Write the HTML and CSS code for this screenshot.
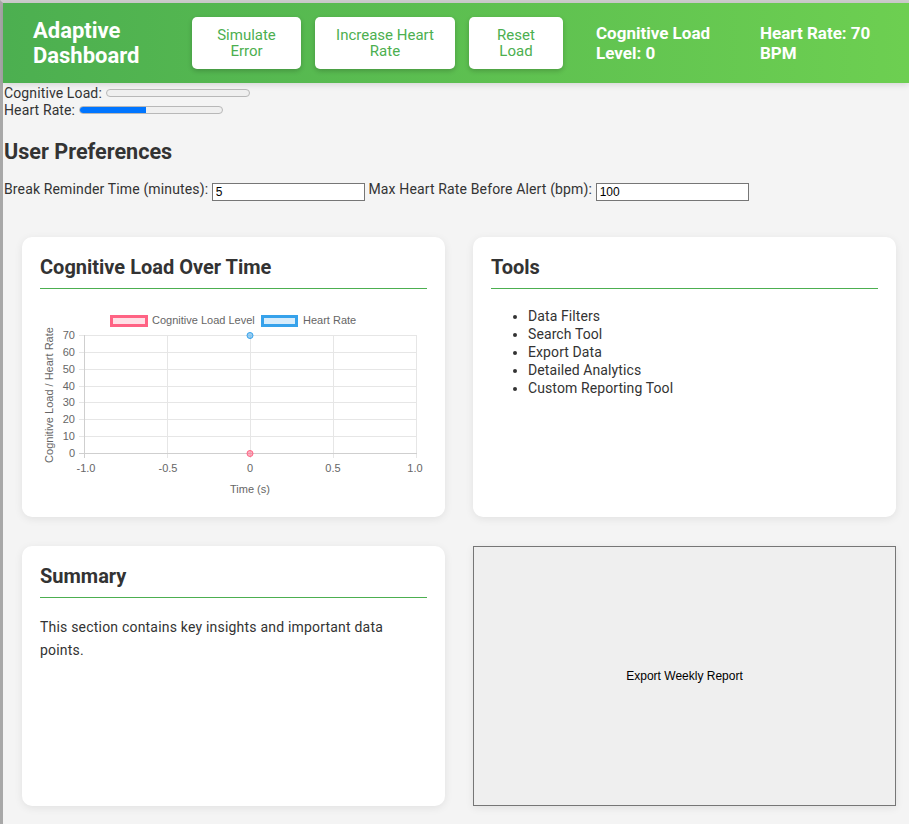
FILE: index.html
```html
<!DOCTYPE html>
<html lang="en">
<head>
<meta charset="utf-8">
<title>Adaptive Dashboard</title>
<link rel="stylesheet" href="styles.css">
</head>
<body>
<div class="frame">
  <header class="topbar">
    <h1 class="brand">Adaptive Dashboard</h1>
    <div class="actions">
      <button class="act act-error">Simulate Error</button>
      <button class="act act-heart">Increase Heart Rate</button>
      <button class="act act-reset">Reset Load</button>
    </div>
    <div class="status">
      <span class="stat stat-load">Cognitive Load Level: 0</span>
      <span class="stat stat-hr">Heart Rate: 70 BPM</span>
    </div>
  </header>

  <div class="meters">
    <div class="meter-row">Cognitive Load: <span class="meter"><span class="meter-fill" style="width:0%"></span></span></div>
    <div class="meter-row">Heart Rate: <span class="meter"><span class="meter-fill" style="width:46.7%"></span></span></div>
  </div>

  <section class="prefs">
    <h2 class="prefs-title">User Preferences</h2>
    <div class="prefs-row">
      <label>Break Reminder Time (minutes): <input class="pref-input" type="text" value="5"></label>
      <label>Max Heart Rate Before Alert (bpm): <input class="pref-input" type="text" value="100"></label>
    </div>
  </section>

  <main class="grid">
    <section class="card">
      <h3 class="card-title">Cognitive Load Over Time</h3>
      <svg class="chart" width="387" height="200" viewBox="0 0 387 200">
        <g class="grid-lines" stroke="#e6e6e6" stroke-width="1">
          <line x1="39" y1="35.5" x2="376" y2="35.5"/>
          <line x1="39" y1="52.5" x2="376" y2="52.5"/>
          <line x1="39" y1="69.5" x2="376" y2="69.5"/>
          <line x1="39" y1="86.5" x2="376" y2="86.5"/>
          <line x1="39" y1="102.5" x2="376" y2="102.5"/>
          <line x1="39" y1="119.5" x2="376" y2="119.5"/>
          <line x1="39" y1="136.5" x2="376" y2="136.5"/>
          <line x1="127.5" y1="35" x2="127.5" y2="158"/>
          <line x1="210.5" y1="35" x2="210.5" y2="158"/>
          <line x1="293.5" y1="35" x2="293.5" y2="158"/>
          <line x1="376.5" y1="35" x2="376.5" y2="158"/>
        </g>
        <g stroke="#cfcfcf" stroke-width="1">
          <line x1="39" y1="153.5" x2="377" y2="153.5"/>
          <line x1="44.5" y1="35" x2="44.5" y2="158"/>
        </g>
        <g class="legend">
          <rect x="71.5" y="16.5" width="35" height="9" fill="rgba(255,99,132,0.2)" stroke="#ff6384" stroke-width="3"/>
          <text x="112" y="24" class="chart-text">Cognitive Load Level</text>
          <rect x="222.5" y="16.5" width="34" height="9" fill="rgba(54,162,235,0.2)" stroke="#36a2eb" stroke-width="3"/>
          <text x="263" y="24" class="chart-text">Heart Rate</text>
        </g>
        <g class="chart-text" text-anchor="end">
          <text x="35" y="39">70</text>
          <text x="35" y="56">60</text>
          <text x="35" y="73">50</text>
          <text x="35" y="90">40</text>
          <text x="35" y="106">30</text>
          <text x="35" y="123">20</text>
          <text x="35" y="140">10</text>
          <text x="35" y="157">0</text>
        </g>
        <g class="chart-text" text-anchor="middle">
          <text x="46" y="172">-1.0</text>
          <text x="128" y="172">-0.5</text>
          <text x="210" y="172">0</text>
          <text x="293" y="172">0.5</text>
          <text x="375" y="172">1.0</text>
          <text x="210" y="193">Time (s)</text>
          <text transform="translate(13,95) rotate(-90)">Cognitive Load / Heart Rate</text>
        </g>
        <circle cx="210" cy="35.5" r="3" fill="rgba(54,162,235,0.5)" stroke="#36a2eb" stroke-width="1"/>
        <circle cx="210" cy="153.5" r="3" fill="rgba(255,99,132,0.5)" stroke="#ff6384" stroke-width="1"/>
      </svg>
    </section>

    <section class="card">
      <h3 class="card-title">Tools</h3>
      <ul class="tool-list">
        <li>Data Filters</li>
        <li>Search Tool</li>
        <li>Export Data</li>
        <li>Detailed Analytics</li>
        <li>Custom Reporting Tool</li>
      </ul>
    </section>

    <section class="card">
      <h3 class="card-title">Summary</h3>
      <p class="summary-text">This section contains key insights and important data points.</p>
    </section>

    <button class="export-btn">Export Weekly Report</button>
  </main>
</div>
</body>
</html>
```

FILE: styles.css
```css
html, body {
  margin: 0;
  padding: 0;
}

body {
  background: #f4f4f4;
  font-family: Roboto, "Noto Sans", Arial, sans-serif;
  color: #333;
  font-size: 14px;
}

.frame {
  border-top: 3px solid #cdcdcd;
  border-left: 3px solid #a8a8a8;
  min-height: 821px;
  box-sizing: border-box;
}

.topbar {
  height: 80px;
  padding: 0 30px;
  display: flex;
  align-items: center;
  background: linear-gradient(90deg, #4caf50, #6dcf51);
  box-shadow: 0 2px 6px rgba(0, 0, 0, 0.12);
  color: #fff;
}

.brand {
  margin: 0;
  width: 159px;
  flex: 0 0 159px;
  font-size: 22px;
  line-height: 25px;
  font-weight: 700;
}

.actions {
  display: flex;
  gap: 14px;
}

.act {
  height: 52px;
  padding: 0 12px;
  border: none;
  border-radius: 5px;
  background: #fff;
  color: #4caf50;
  font-family: Roboto, Arial, sans-serif;
  font-size: 15px;
  line-height: 16px;
  box-shadow: 0 2px 5px rgba(0, 0, 0, 0.2);
  text-align: center;
}

.act-error { width: 109px; }
.act-heart { width: 140px; }
.act-reset { width: 94px; }

.status {
  display: flex;
  margin-left: 33px;
}

.stat {
  font-size: 17px;
  font-weight: 700;
  line-height: 20px;
}

.stat-load {
  width: 140px;
  margin-right: 24px;
}

.stat-hr {
  width: 125px;
}

.meters {
  padding-top: 2px;
  letter-spacing: 0.12px;
}

.meter-row {
  line-height: 17px;
  height: 17px;
  padding-left: 1px;
}

.meter {
  display: inline-block;
  position: relative;
  width: 142px;
  height: 6px;
  border: 1px solid #b8b8b8;
  border-radius: 4px;
  background: #efefef;
  vertical-align: 1px;
  overflow: hidden;
}

.meter-fill {
  display: block;
  height: 100%;
  background: #0075ff;
}

.prefs {
  padding-left: 1px;
}

.prefs-title {
  margin: 20px 0 14px;
  font-size: 21.6px;
  line-height: 26px;
  font-weight: 700;
  color: #333;
}

.prefs-row {
  line-height: 20px;
  letter-spacing: 0.14px;
}

.pref-input {
  box-sizing: border-box;
  width: 153px;
  height: 18px;
  border: 1px solid #767676;
  padding: 0 3px;
  font-family: "Liberation Sans", Arial, sans-serif;
  font-size: 12px;
  letter-spacing: 0;
  color: #000;
  background: #fff;
  vertical-align: -2px;
  margin: 0;
}

.grid {
  display: grid;
  grid-template-columns: 423px 423px;
  grid-template-rows: 280px 260px;
  column-gap: 28px;
  row-gap: 29px;
  margin: 36px 0 0 19px;
  padding-bottom: 18px;
}

.card {
  background: #fff;
  border-radius: 10px;
  box-shadow: 0 2px 8px rgba(0, 0, 0, 0.08);
  padding: 18px;
}

.card-title {
  margin: 0;
  padding-bottom: 9px;
  border-bottom: 1px solid #4caf50;
  font-size: 20px;
  line-height: 24px;
  font-weight: 700;
  color: #333;
}

.chart {
  display: block;
  margin-top: 11px;
}

.chart-text {
  font-family: "Liberation Sans", Arial, sans-serif;
  font-size: 11px;
  fill: #666;
}

.tool-list {
  margin: 18px 0 0;
  padding-left: 37px;
  letter-spacing: 0.1px;
}

.tool-list li {
  line-height: 18px;
}

.summary-text {
  margin: 18px 0 0;
  line-height: 23px;
  letter-spacing: 0.2px;
}

.export-btn {
  margin: 0;
  border: 1px solid #767676;
  background: #efefef;
  font-family: "Liberation Sans", Arial, sans-serif;
  font-size: 12px;
  color: #000;
  box-shadow: 0 2px 8px rgba(0, 0, 0, 0.08);
}
```
